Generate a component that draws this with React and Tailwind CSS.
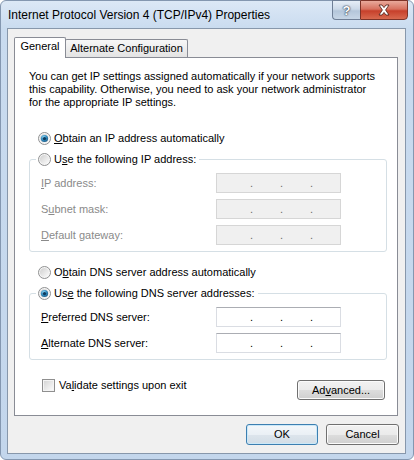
import React from 'react';

const DISABLED = 'text-[#8a8a8a]';

function Radio({ checked, id }) {
  return (
    <svg width="13" height="13" viewBox="0 0 13 13" className="shrink-0">
      <defs>
        <linearGradient id={`rb-${id}`} x1="0" y1="0" x2="1" y2="1">
          <stop offset="0" stopColor="#cfcfcf" />
          <stop offset="1" stopColor="#fcfcfc" />
        </linearGradient>
        <radialGradient id={`rd-${id}`} cx="0.4" cy="0.35" r="0.7">
          <stop offset="0" stopColor="#9fe0f8" />
          <stop offset="0.55" stopColor="#2f8bc0" />
          <stop offset="1" stopColor="#1a5680" />
        </radialGradient>
      </defs>
      <circle cx="6.5" cy="6.5" r="6" fill="#f6f6f6" stroke="#8f9091" />
      <circle cx="6.5" cy="6.5" r="4.6" fill={`url(#rb-${id})`} />
      {checked && (
        <>
          <circle cx="6.5" cy="6.5" r="3.6" fill={`url(#rd-${id})`} />
          <circle cx="6.5" cy="6.6" r="1.7" fill="#0d3a5c" />
        </>
      )}
    </svg>
  );
}

function Checkbox() {
  return (
    <svg width="13" height="13" viewBox="0 0 13 13" className="shrink-0">
      <defs>
        <linearGradient id="cb-fill" x1="0" y1="0" x2="1" y2="1">
          <stop offset="0" stopColor="#d6d6d6" />
          <stop offset="1" stopColor="#fafafa" />
        </linearGradient>
      </defs>
      <rect x="0.5" y="0.5" width="12" height="12" fill="#f4f4f4" stroke="#8f8f8f" />
      <rect x="2" y="2" width="9" height="9" fill="url(#cb-fill)" />
    </svg>
  );
}

function IpField({ disabled }) {
  return (
    <div
      className={`w-[125px] h-[20px] border flex items-center pl-[33px] gap-[27px] text-[11px] leading-[18px] ${
        disabled
          ? 'bg-[#f0f0f0] border-[#d6d6d6] text-[#6d6d6d]'
          : 'bg-white border-[#dadde3] border-t-[#abadb3] text-black'
      }`}
    >
      <span className="w-[3px]">.</span>
      <span className="w-[3px]">.</span>
      <span className="w-[3px]">.</span>
    </div>
  );
}

function FieldRow({ label, disabled }) {
  return (
    <div className="flex items-center h-[20px] pl-[11px]">
      <div className={`w-[175px] ${disabled ? DISABLED : 'text-black'}`}>{label}</div>
      <IpField disabled={disabled} />
    </div>
  );
}

function OptionRow({ id, checked, children }) {
  return (
    <div className="flex items-center h-[13px] gap-[3px]">
      <Radio id={id} checked={checked} />
      <span className="leading-[13px]">{children}</span>
    </div>
  );
}

function GroupBox({ id, checked, title, children }) {
  return (
    <div className="w-[358px] ml-[14px] border border-[#d5dfe5] rounded-[3px] pb-[6px]">
      <div className="-mt-[7px] ml-[6px] w-fit bg-white pl-[2px] pr-[3px]">
        <OptionRow id={id} checked={checked}>
          {title}
        </OptionRow>
      </div>
      <div className="mt-[7px] flex flex-col gap-[6px]">{children}</div>
    </div>
  );
}

function WinButton({ children, className = '', primary }) {
  return (
    <button
      className={`h-[21px] rounded-[3px] border text-[11px] leading-none text-black ${
        primary
          ? 'border-[#3c7fb1] bg-[linear-gradient(to_bottom,#f3f7fa_0%,#eaf0f5_50%,#dde5ec_51%,#d2dde6_100%)] shadow-[inset_0_0_0_1px_#cbe8f8]'
          : 'border-[#707070] bg-[linear-gradient(to_bottom,#f2f2f2_0%,#ebebeb_50%,#dddddd_51%,#cfcfcf_100%)] shadow-[inset_0_0_0_1px_#fbfbfb]'
      } ${className}`}
    >
      {children}
    </button>
  );
}

export default function App() {
  return (
    <div className="w-[414px] h-[460px] bg-white font-['Liberation_Sans',Arial,sans-serif] text-[11px] text-black">
      <div className="w-[414px] h-[460px] rounded-[6px] border border-[#8497b0] bg-[linear-gradient(to_bottom,#dce8f6_0px,#c9dbef_28px,#c3d6ec_100%)] flex flex-col">
        {/* Title bar */}
        <div className="h-[27px] flex items-start shrink-0">
          <div className="pl-[7px] pt-[7px] text-[12px] leading-[14px] text-black">
            Internet Protocol Version 4 (TCP/IPv4) Properties
          </div>
          <div className="ml-auto mr-[5px] -mt-px flex">
            <div className="w-[28px] h-[20px] rounded-bl-[4px] border border-r-0 border-[#6f7f96] bg-[linear-gradient(to_bottom,#e6eef7_0%,#ccd9e8_45%,#b4c6da_55%,#c7d6e6_100%)] flex items-center justify-center">
              <span className="text-[13px] leading-none font-bold text-white [text-shadow:0_0_1px_#1c2a3c,0_0_2px_#1c2a3c]">
                ?
              </span>
            </div>
            <div className="w-[48px] h-[20px] rounded-br-[4px] border border-[#7d3328] bg-[linear-gradient(to_bottom,#e9a99b_0%,#d7715f_45%,#c7402b_55%,#d8694f_100%)] flex items-center justify-center">
              <svg width="14" height="12" viewBox="0 0 14 12">
                <path
                  d="M2 1h3l2 2.6L9 1h3L8.6 6 12 11H9L7 8.4 5 11H2l3.4-5z"
                  fill="#ffffff"
                  stroke="#4a1a12"
                  strokeWidth="0.8"
                  strokeLinejoin="round"
                />
              </svg>
            </div>
          </div>
        </div>

        {/* Client area */}
        <div className="ml-[6px] mr-[7px] h-[426px] border border-[#8797ab] bg-[#f0f0f0] flex flex-col">
          {/* Tabs */}
          <div className="pt-[8px] pl-[6px] flex items-end">
            <div className="relative z-10 w-[52px] h-[21px] -mb-px border border-b-0 border-[#898c95] rounded-t-[2px] bg-white pt-[2px] text-center leading-[13px]">
              General
            </div>
            <div className="-ml-px w-[123px] h-[18px] border border-b-0 border-[#898c95] rounded-t-[2px] bg-[linear-gradient(to_bottom,#f7f7f7,#e3e3e3)] pt-[2px] text-center leading-[13px]">
              Alternate Configuration
            </div>
          </div>

          {/* Tab panel */}
          <div className="ml-[6px] mr-[7px] h-[359px] border border-[#898c95] bg-white flex flex-col">
            <p className="pl-[14px] pt-[12px] leading-[13px]">
              You can get IP settings assigned automatically if your network supports
              <br />
              this capability. Otherwise, you need to ask your network administrator
              <br />
              for the appropriate IP settings.
            </p>

            <div className="mt-[23px] ml-[23px]">
              <OptionRow id="ip-auto" checked>
                <u>O</u>btain an IP address automatically
              </OptionRow>
            </div>

            <div className="mt-[14px]">
              <GroupBox
                id="ip-manual"
                title={
                  <>
                    U<u>s</u>e the following IP address:
                  </>
                }
              >
                <FieldRow
                  disabled
                  label={
                    <>
                      <u>I</u>P address:
                    </>
                  }
                />
                <FieldRow
                  disabled
                  label={
                    <>
                      S<u>u</u>bnet mask:
                    </>
                  }
                />
                <FieldRow
                  disabled
                  label={
                    <>
                      <u>D</u>efault gateway:
                    </>
                  }
                />
              </GroupBox>
            </div>

            <div className="mt-[14px] ml-[23px]">
              <OptionRow id="dns-auto">
                O<u>b</u>tain DNS server address automatically
              </OptionRow>
            </div>

            <div className="mt-[14px]">
              <GroupBox
                id="dns-manual"
                checked
                title={
                  <>
                    Us<u>e</u> the following DNS server addresses:
                  </>
                }
              >
                <FieldRow
                  label={
                    <>
                      <u>P</u>referred DNS server:
                    </>
                  }
                />
                <FieldRow
                  label={
                    <>
                      <u>A</u>lternate DNS server:
                    </>
                  }
                />
              </GroupBox>
            </div>

            <div className="mt-[19px] flex items-start">
              <div className="ml-[27px] flex items-center gap-[4px] h-[13px]">
                <Checkbox />
                <span className="leading-[13px]">
                  Va<u>l</u>idate settings upon exit
                </span>
              </div>
              <WinButton className="ml-auto mr-[12px] mt-px w-[88px] !h-[20px]">
                Ad<u>v</u>anced...
              </WinButton>
            </div>
          </div>

          {/* Dialog buttons */}
          <div className="mt-[8px] mr-[6px] flex justify-end gap-[8px]">
            <WinButton primary className="w-[72px]">
              OK
            </WinButton>
            <WinButton className="w-[73px]">Cancel</WinButton>
          </div>
        </div>
      </div>
    </div>
  );
}
